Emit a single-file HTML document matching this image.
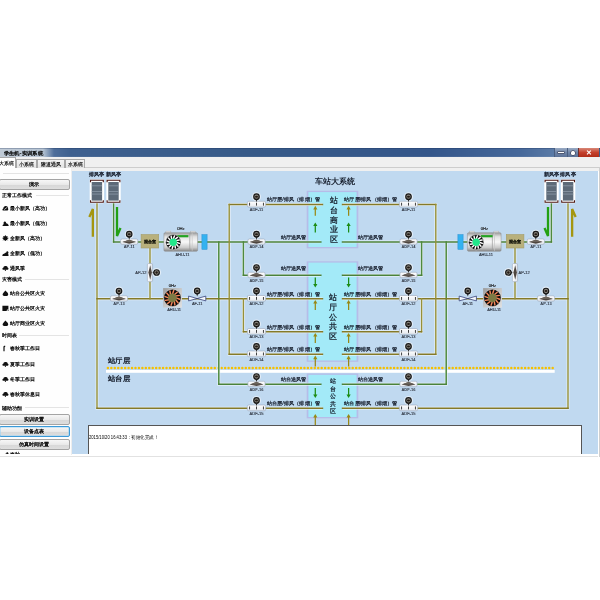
<!DOCTYPE html>
<html><head><meta charset="utf-8">
<style>
html,body{margin:0;padding:0;width:600px;height:600px;overflow:hidden;background:#fff;}
body{position:relative;font-family:"Liberation Sans",sans-serif;}
.abs{position:absolute;}
#title{left:0;top:148px;width:600px;height:9.5px;background:linear-gradient(180deg,rgba(20,40,80,.45) 0px,rgba(20,40,80,0) 1.2px,rgba(255,255,255,0) 8px,rgba(255,255,255,.18) 9.5px),linear-gradient(90deg,#bfcad6 0px,#b6c4d3 43px,#4d6d9a 54px,#3e608f 70px,#375a88 250px,#34568a 430px,#46689a 520px,#5a7aa6 553px,#3c5e8e 600px);}
#title span{position:absolute;left:3px;top:0px;font-size:5px;line-height:9px;color:#080808;font-weight:bold;transform:scaleX(1.08);transform-origin:0 0;white-space:nowrap;}
#tabstrip{left:0;top:157px;width:600px;height:14px;background:#f0f0f0;}
.tab{position:absolute;top:159px;height:9px;border:1px solid #a8a8a8;border-bottom:none;background:linear-gradient(#f4f4f4,#e2e2e2);font-size:5px;line-height:9px;text-align:center;color:#000;box-sizing:border-box;white-space:nowrap;overflow:hidden;-webkit-text-stroke:.12px #000;}
#left{left:0;top:168px;width:71.5px;height:287px;background:#fefefe;border-right:1px solid #ededed;box-sizing:border-box;}
.grp{position:absolute;left:2px;font-size:5px;line-height:7px;color:#000;white-space:nowrap;-webkit-text-stroke:.2px #000;}
.item{position:absolute;left:2px;font-size:5px;line-height:7px;color:#000;white-space:nowrap;-webkit-text-stroke:.2px #000;}
.item svg.ic{position:static;display:inline-block;width:7px;height:6.4px;margin-right:1.2px;vertical-align:-1px;}
.btn{position:absolute;left:-1px;width:70.5px;height:11px;border:1px solid #a4a4a4;border-radius:2px;background:linear-gradient(#f7f7f7,#e9e9e9 50%,#d7d7d7 51%,#dedede);font-size:5.3px;line-height:9px;text-align:center;color:#000;box-sizing:border-box;-webkit-text-stroke:.25px #000;}
.btn.focus{border-color:#3c9ad8;box-shadow:inset 0 0 0 .6px #9fd4f4;}
.sep{position:absolute;height:1px;background:#e4e4e4;}
#canvas{left:72px;top:171px;width:526px;height:283px;background:#c0d9f0;}
#bottomline{left:0;top:455.6px;width:598px;height:1px;background:#e2e2e2;}
#log{left:88px;top:425px;width:494px;height:29px;background:#fff;border-left:1px solid #555;border-top:1px solid #555;border-right:1px solid #555;box-sizing:border-box;}
#log span{position:absolute;left:0;top:9px;font-size:4.6px;line-height:6px;color:#000;transform:scaleX(.9);transform-origin:0 0;white-space:nowrap;}
</style></head>
<body>
<div id="root" style="position:absolute;left:0;top:0;width:600px;height:600px;will-change:transform;background:#fff;">
<div id="title" class="abs"></div>
<div class="abs" style="left:553.5px;top:148px;width:13.5px;height:9px;background:linear-gradient(#9aabc4,#6f85a8 50%,#5c7298);border-left:1px solid #4a5e80;box-sizing:border-box;"><div class="abs" style="left:3.5px;top:3.8px;width:5.5px;height:1.6px;background:#fff;box-shadow:0 0 0 .5px #334;"></div></div>
<div class="abs" style="left:567px;top:148px;width:11px;height:9px;background:linear-gradient(#9aabc4,#6f85a8 50%,#5c7298);border-left:1px solid #4a5e80;box-sizing:border-box;"><div class="abs" style="left:3px;top:2.5px;width:4px;height:4px;background:#fff;border-radius:1.5px;box-shadow:0 0 0 .5px #334;"></div></div>
<div class="abs" style="left:578px;top:148px;width:21px;height:9px;background:linear-gradient(#d88878,#c4402c 50%,#b02c18);border-left:1px solid #6a3030;box-sizing:border-box;"><div class="abs" style="left:7px;top:0;font-size:6.5px;line-height:9px;color:#fff;font-weight:bold;">✕</div></div>
<div id="tabstrip" class="abs"></div>
<div class="abs" style="left:0;top:167px;width:599px;height:1px;background:#cdcdcd;"></div>
<div class="tab" style="left:-9px;top:157px;height:11px;width:25px;background:#fff;line-height:10px;text-align:right;padding-right:1px;">大系统</div>
<div class="tab" style="left:16px;width:21px;">小系统</div>
<div class="tab" style="left:37px;width:28px;">隧道通风</div>
<div class="tab" style="left:65px;width:20px;">水系统</div>
<div id="left" class="abs">
</div>
<div class="abs" style="left:0;top:0;width:0;height:0;">
<div class="sep" style="top:173px;left:3px;width:66px"></div>
<div class="btn" style="top:179px">演示</div>
<div class="grp" style="top:192.0px">正常工作模式</div><div class="sep" style="top:194.5px;left:36px;width:33px"></div>
<div class="item" style="top:204.8px"><svg class="ic" width="7" height="6.4" viewBox="0 0 7 6.4"><path d="M1,5.6 C0.2,5.4 0.2,3.6 1.3,3.4 C1.4,1.6 3,0.6 4.6,1.2 C5.8,1.5 6.4,2.6 6,3.6 C6.6,4.2 6.2,5.6 5.4,5.6 Z" fill="#111"/><path d="M2.2,4.6 L5.4,2.2" stroke="#fff" stroke-width=".7"/></svg>最小新风（高功）</div>
<div class="item" style="top:219.8px"><svg class="ic" width="7" height="6.4" viewBox="0 0 7 6.4"><path d="M0.6,6 C0.4,4.8 1.2,4.2 2,4.2 C1.2,3.4 1.4,1.6 2.6,1.4 C3.8,1.2 4.4,2.4 4,3.4 C5,3.2 6.4,4 6.8,6 Z" fill="#111"/></svg>最小新风（低功）</div>
<div class="item" style="top:234.8px"><svg class="ic" width="7" height="6.4" viewBox="0 0 7 6.4"><circle cx="3.4" cy="3.2" r="2.2" fill="#111"/><path d="M3.4,0.2 V6.2 M0.4,3.2 H6.4 M1.3,1.1 L5.5,5.3 M5.5,1.1 L1.3,5.3" stroke="#111" stroke-width=".8"/></svg>全新风（高功）</div>
<div class="item" style="top:250.0px"><svg class="ic" width="7" height="6.4" viewBox="0 0 7 6.4"><path d="M0.4,6 C0.2,4.6 1,3.6 2.4,3.8 C2.6,2.8 3.4,2.6 4.2,3 C4,1.6 5,0.8 5.9,1.4 C6.8,2 6.6,3.4 5.8,3.8 C6.6,4.2 6.8,5.4 6.4,6 Z" fill="#111"/></svg>全新风（低功）</div>
<div class="item" style="top:265.0px"><svg class="ic" width="7" height="6.4" viewBox="0 0 7 6.4"><path d="M1,4.8 C0,4.6 0.2,2.8 1.4,2.8 C1.4,1.4 2.6,0.6 3.6,1 C4.6,0.6 5.8,1.4 5.6,2.6 C6.8,2.8 6.8,4.6 5.8,4.8 Z" fill="#111"/><path d="M3.4,4.4 V6.2" stroke="#111" stroke-width=".9"/></svg>通风季</div>
<div class="grp" style="top:276.0px">灾害模式</div><div class="sep" style="top:278.5px;left:25px;width:44px"></div>
<div class="item" style="top:289.5px"><svg class="ic" width="7" height="6.4" viewBox="0 0 7 6.4"><path d="M3.4,0.4 C4.6,1.6 6.4,3 6.2,4.4 C6,5.8 4.6,6.2 3.4,6.2 C2,6.2 0.6,5.6 0.6,4.2 C0.8,3 2.4,1.8 3.4,0.4 Z" fill="#111"/></svg>站台公共区火灾</div>
<div class="item" style="top:304.5px"><svg class="ic" width="7" height="6.4" viewBox="0 0 7 6.4"><path d="M0.4,0.8 H6.4 V4 C5.6,3.8 4.6,4.4 4.4,6 H0.4 Z" fill="#111"/><circle cx="5.4" cy="5.2" r="1" fill="none" stroke="#111" stroke-width=".6"/></svg>站厅公共区火灾</div>
<div class="item" style="top:319.5px"><svg class="ic" width="7" height="6.4" viewBox="0 0 7 6.4"><path d="M3.4,0.4 C4.6,1.6 6.4,3 6.2,4.4 C6,5.8 4.6,6.2 3.4,6.2 C2,6.2 0.6,5.6 0.6,4.2 C0.8,3 2.4,1.8 3.4,0.4 Z" fill="#111"/></svg>站厅商业区火灾</div>
<div class="grp" style="top:332.0px">时间表</div><div class="sep" style="top:334.5px;left:19px;width:50px"></div>
<div class="item" style="top:345.3px"><svg class="ic" width="7" height="6.4" viewBox="0 0 7 6.4"><path d="M1.4,6.2 V2 C1.4,1 2.4,0.6 3.2,0.8 V2 C2.6,2 2.6,2.6 2.6,3 V6.2 Z" fill="#111"/></svg>春秋季工作日</div>
<div class="item" style="top:360.5px"><svg class="ic" width="7" height="6.4" viewBox="0 0 7 6.4"><path d="M1,4.8 C0,4.6 0.2,2.8 1.4,2.8 C1.4,1.4 2.6,0.6 3.6,1 C4.6,0.6 5.8,1.4 5.6,2.6 C6.8,2.8 6.8,4.6 5.8,4.8 Z" fill="#111"/><path d="M3.4,4.4 V6.2" stroke="#111" stroke-width=".9"/></svg>夏季工作日</div>
<div class="item" style="top:375.5px"><svg class="ic" width="7" height="6.4" viewBox="0 0 7 6.4"><path d="M1,4.8 C0,4.6 0.2,2.8 1.4,2.8 C1.4,1.4 2.6,0.6 3.6,1 C4.6,0.6 5.8,1.4 5.6,2.6 C6.8,2.8 6.8,4.6 5.8,4.8 Z" fill="#111"/><path d="M3.4,4.4 V6.2" stroke="#111" stroke-width=".9"/></svg>冬季工作日</div>
<div class="item" style="top:390.5px"><svg class="ic" width="7" height="6.4" viewBox="0 0 7 6.4"><path d="M1,4.8 C0,4.6 0.2,2.8 1.4,2.8 C1.4,1.4 2.6,0.6 3.6,1 C4.6,0.6 5.8,1.4 5.6,2.6 C6.8,2.8 6.8,4.6 5.8,4.8 Z" fill="#111"/><path d="M3.4,4.4 V6.2" stroke="#111" stroke-width=".9"/></svg>春秋季休息日</div>
<div class="grp" style="top:404.9px">辅助功能</div><div class="sep" style="top:407.4px;left:25px;width:44px"></div>
<div class="btn" style="top:413.8px">实训设置</div>
<div class="btn focus" style="top:426px">设备点表</div>
<div class="btn" style="top:438.8px">仿真时间设置</div>
<div class="item" style="top:450.5px;overflow:hidden;height:3.5px"><svg class="ic" width="7" height="6.4" viewBox="0 0 7 6.4"><path d="M0.4,6 C0.2,4.6 1,3.6 2.4,3.8 C2.6,2.8 3.4,2.6 4.2,3 C4,1.6 5,0.8 5.9,1.4 C6.8,2 6.6,3.4 5.8,3.8 C6.6,4.2 6.8,5.4 6.4,6 Z" fill="#111"/></svg>春秋</div>
</div>
<div id="canvas" class="abs"></div>
<svg width="600" height="600" viewBox="0 0 600 600" style="position:absolute;left:0;top:0" font-family="Liberation Sans, sans-serif"><defs>
<linearGradient id="cyl" x1="0" y1="0" x2="0" y2="1">
<stop offset="0" stop-color="#9c9c9c"/><stop offset=".22" stop-color="#e2e2e2"/><stop offset=".5" stop-color="#f8f8f8"/><stop offset=".8" stop-color="#cacaca"/><stop offset="1" stop-color="#848484"/></linearGradient>
<linearGradient id="dmp" x1="0" y1="0" x2="0" y2="1"><stop offset="0" stop-color="#ffffff"/><stop offset="1" stop-color="#e4e8ee"/></linearGradient>
<linearGradient id="dmpv" x1="0" y1="0" x2="1" y2="0"><stop offset="0" stop-color="#ffffff"/><stop offset="1" stop-color="#e0e6ee"/></linearGradient>
<linearGradient id="gbox" x1="0" y1="0" x2="1" y2="1">
<stop offset="0" stop-color="#9a9a9a"/><stop offset=".5" stop-color="#c8c8c8"/><stop offset="1" stop-color="#e0e0e0"/></linearGradient>
</defs><rect x="306.7" y="190.8" width="51.6" height="57.5" fill="#b6bce8"/>
<rect x="308.4" y="192.10000000000002" width="48.2" height="54.9" fill="#a3eaf8"/>
<rect x="306.7" y="261.3" width="51.6" height="100.5" fill="#b6bce8"/>
<rect x="308.4" y="262.6" width="48.2" height="97.9" fill="#a3eaf8"/>
<rect x="306.7" y="373.5" width="51.6" height="44.80000000000001" fill="#b6bce8"/>
<rect x="308.4" y="374.8" width="48.2" height="42.20000000000001" fill="#a3eaf8"/>
<rect x="106" y="370" width="448.7" height="2.8" fill="#ffffff"/>
<line x1="107.9" y1="367.9" x2="553.5" y2="367.9" stroke="#f4c000" stroke-width="2.5" stroke-dasharray="0,3.448" stroke-linecap="round"/>
<polyline points="113.6,203.3 113.6,241.9 320.8,241.9" fill="none" stroke="#f2f7fb" stroke-width="2.9" opacity=".75"/>
<polyline points="243.4,241.9 243.4,275.2 320.8,275.2" fill="none" stroke="#f2f7fb" stroke-width="2.9" opacity=".75"/>
<polyline points="218.8,241.9 218.8,384.2 320.8,384.2" fill="none" stroke="#f2f7fb" stroke-width="2.9" opacity=".75"/>
<polyline points="551.4,203.3 551.4,241.9 342.5,241.9" fill="none" stroke="#f2f7fb" stroke-width="2.9" opacity=".75"/>
<polyline points="421.6,241.9 421.6,275.2 342.5,275.2" fill="none" stroke="#f2f7fb" stroke-width="2.9" opacity=".75"/>
<polyline points="446.2,241.9 446.2,384.2 342.5,384.2" fill="none" stroke="#f2f7fb" stroke-width="2.9" opacity=".75"/>
<polyline points="97,203.3 97,408.2 322.5,408.2" fill="none" stroke="#f2f7fb" stroke-width="2.9" opacity=".75"/>
<polyline points="568.0,203.3 568.0,408.2 342.5,408.2" fill="none" stroke="#f2f7fb" stroke-width="2.9" opacity=".75"/>
<polyline points="97,298.7 322.5,298.7" fill="none" stroke="#f2f7fb" stroke-width="2.9" opacity=".75"/>
<polyline points="150,248 150,298.7" fill="none" stroke="#f2f7fb" stroke-width="2.9" opacity=".75"/>
<polyline points="322.5,204.5 229.2,204.5 229.2,354.2 322.5,354.2" fill="none" stroke="#f2f7fb" stroke-width="2.9" opacity=".75"/>
<polyline points="243.4,298.7 243.4,331.7 322.5,331.7" fill="none" stroke="#f2f7fb" stroke-width="2.9" opacity=".75"/>
<polyline points="568.0,298.7 342.5,298.7" fill="none" stroke="#f2f7fb" stroke-width="2.9" opacity=".75"/>
<polyline points="515.0,248 515.0,298.7" fill="none" stroke="#f2f7fb" stroke-width="2.9" opacity=".75"/>
<polyline points="342.5,204.5 435.8,204.5 435.8,354.2 342.5,354.2" fill="none" stroke="#f2f7fb" stroke-width="2.9" opacity=".75"/>
<polyline points="421.6,298.7 421.6,331.7 342.5,331.7" fill="none" stroke="#f2f7fb" stroke-width="2.9" opacity=".75"/>
<line x1="113.6" y1="203.3" x2="113.6" y2="241.9" stroke="#4e8a3e" stroke-width="1.5" stroke-linecap="square"/>
<line x1="113.6" y1="241.9" x2="320.8" y2="241.9" stroke="#4a823a" stroke-width="1.5" stroke-linecap="square"/>
<line x1="243.4" y1="241.9" x2="243.4" y2="275.2" stroke="#4e8a3e" stroke-width="1.5" stroke-linecap="square"/>
<line x1="243.4" y1="275.2" x2="320.8" y2="275.2" stroke="#4a823a" stroke-width="1.5" stroke-linecap="square"/>
<line x1="218.8" y1="241.9" x2="218.8" y2="384.2" stroke="#4e8a3e" stroke-width="1.5" stroke-linecap="square"/>
<line x1="218.8" y1="384.2" x2="320.8" y2="384.2" stroke="#4a823a" stroke-width="1.5" stroke-linecap="square"/>
<line x1="551.4" y1="203.3" x2="551.4" y2="241.9" stroke="#4e8a3e" stroke-width="1.5" stroke-linecap="square"/>
<line x1="551.4" y1="241.9" x2="342.5" y2="241.9" stroke="#4a823a" stroke-width="1.5" stroke-linecap="square"/>
<line x1="421.6" y1="241.9" x2="421.6" y2="275.2" stroke="#4e8a3e" stroke-width="1.5" stroke-linecap="square"/>
<line x1="421.6" y1="275.2" x2="342.5" y2="275.2" stroke="#4a823a" stroke-width="1.5" stroke-linecap="square"/>
<line x1="446.2" y1="241.9" x2="446.2" y2="384.2" stroke="#4e8a3e" stroke-width="1.5" stroke-linecap="square"/>
<line x1="446.2" y1="384.2" x2="342.5" y2="384.2" stroke="#4a823a" stroke-width="1.5" stroke-linecap="square"/>
<line x1="97" y1="203.3" x2="97" y2="408.2" stroke="#969038" stroke-width="1.4" stroke-linecap="square"/>
<line x1="97" y1="408.2" x2="322.5" y2="408.2" stroke="#857a28" stroke-width="1.4" stroke-linecap="square"/>
<line x1="568.0" y1="203.3" x2="568.0" y2="408.2" stroke="#969038" stroke-width="1.4" stroke-linecap="square"/>
<line x1="568.0" y1="408.2" x2="342.5" y2="408.2" stroke="#857a28" stroke-width="1.4" stroke-linecap="square"/>
<line x1="97" y1="298.7" x2="322.5" y2="298.7" stroke="#857a28" stroke-width="1.4" stroke-linecap="square"/>
<line x1="150" y1="248" x2="150" y2="298.7" stroke="#969038" stroke-width="1.4" stroke-linecap="square"/>
<line x1="322.5" y1="204.5" x2="229.2" y2="204.5" stroke="#857a28" stroke-width="1.4" stroke-linecap="square"/>
<line x1="229.2" y1="204.5" x2="229.2" y2="354.2" stroke="#969038" stroke-width="1.4" stroke-linecap="square"/>
<line x1="229.2" y1="354.2" x2="322.5" y2="354.2" stroke="#857a28" stroke-width="1.4" stroke-linecap="square"/>
<line x1="243.4" y1="298.7" x2="243.4" y2="331.7" stroke="#969038" stroke-width="1.4" stroke-linecap="square"/>
<line x1="243.4" y1="331.7" x2="322.5" y2="331.7" stroke="#857a28" stroke-width="1.4" stroke-linecap="square"/>
<line x1="568.0" y1="298.7" x2="342.5" y2="298.7" stroke="#857a28" stroke-width="1.4" stroke-linecap="square"/>
<line x1="515.0" y1="248" x2="515.0" y2="298.7" stroke="#969038" stroke-width="1.4" stroke-linecap="square"/>
<line x1="342.5" y1="204.5" x2="435.8" y2="204.5" stroke="#857a28" stroke-width="1.4" stroke-linecap="square"/>
<line x1="435.8" y1="204.5" x2="435.8" y2="354.2" stroke="#969038" stroke-width="1.4" stroke-linecap="square"/>
<line x1="435.8" y1="354.2" x2="342.5" y2="354.2" stroke="#857a28" stroke-width="1.4" stroke-linecap="square"/>
<line x1="421.6" y1="298.7" x2="421.6" y2="331.7" stroke="#969038" stroke-width="1.4" stroke-linecap="square"/>
<line x1="421.6" y1="331.7" x2="342.5" y2="331.7" stroke="#857a28" stroke-width="1.4" stroke-linecap="square"/>
<text x="3.5" y="154.6" font-size="5.4" fill="#0a0a0a" text-anchor="start" stroke="#0a0a0a" stroke-width=".28" textLength="39.5" lengthAdjust="spacingAndGlyphs">学生机-实训系统</text>
<text x="335" y="184" font-size="7.8" fill="#141c2a" text-anchor="middle" font-weight="bold">车站大系统</text>
<text x="108" y="362.5" font-size="7.4" fill="#141c2a" text-anchor="start" stroke="#141c2a" stroke-width=".3" textLength="22.2" lengthAdjust="spacingAndGlyphs">站厅层</text>
<text x="108" y="381" font-size="7.4" fill="#141c2a" text-anchor="start" stroke="#141c2a" stroke-width=".3" textLength="22.2" lengthAdjust="spacingAndGlyphs">站台层</text>
<rect x="89.7" y="179.3" width="14.4" height="24" rx="1" fill="#ffffff"/>
<path d="M90.5,182.3 V180.3 H103.3 V182.3" fill="none" stroke="#4a1410" stroke-width="1.1"/>
<path d="M90.5,200.3 V202.3 H103.3 V200.3" fill="none" stroke="#4a1410" stroke-width="1.1"/>
<rect x="91.7" y="182.0" width="10.4" height="18.6" fill="#5d6a78"/>
<rect x="91.7" y="185.5" width="10.4" height="0.7" fill="#93a0ae"/>
<rect x="91.7" y="191.0" width="10.4" height="0.7" fill="#93a0ae"/>
<rect x="91.7" y="193.70000000000002" width="10.4" height="0.7" fill="#93a0ae"/>
<text x="96.9" y="175.9" font-size="5.1" fill="#1a2230" text-anchor="middle" stroke="#1a2230" stroke-width=".3" textLength="15.6" lengthAdjust="spacingAndGlyphs">排风亭</text>
<rect x="106.3" y="179.3" width="14.4" height="24" rx="1" fill="#ffffff"/>
<path d="M107.1,182.3 V180.3 H119.89999999999999 V182.3" fill="none" stroke="#4a1410" stroke-width="1.1"/>
<path d="M107.1,200.3 V202.3 H119.89999999999999 V200.3" fill="none" stroke="#4a1410" stroke-width="1.1"/>
<rect x="108.3" y="182.0" width="10.4" height="18.6" fill="#5d6a78"/>
<rect x="108.3" y="185.5" width="10.4" height="0.7" fill="#93a0ae"/>
<rect x="108.3" y="191.0" width="10.4" height="0.7" fill="#93a0ae"/>
<rect x="108.3" y="193.70000000000002" width="10.4" height="0.7" fill="#93a0ae"/>
<text x="113.5" y="175.9" font-size="5.1" fill="#1a2230" text-anchor="middle" stroke="#1a2230" stroke-width=".3" textLength="15.6" lengthAdjust="spacingAndGlyphs">新风亭</text>
<rect x="141.1" y="234.6" width="17.6" height="13.4" fill="#b8b07c" stroke="#a49c66" stroke-width=".6"/>
<text x="149.9" y="243.2" font-size="4.4" fill="#1a1a10" text-anchor="middle" font-weight="bold" stroke="#1a1a10" stroke-width=".15">混合室</text>
<rect x="201.9" y="234.6" width="5.2" height="14.8" fill="#34b2f0" stroke="#2a8fd0" stroke-width=".5"/>
<rect x="165.9" y="231.1" width="5" height="2" fill="#e6e6e6" stroke="#999" stroke-width=".3"/>
<rect x="190.4" y="231.1" width="5" height="2" fill="#e6e6e6" stroke="#999" stroke-width=".3"/>
<rect x="163.9" y="232.7" width="33.7" height="18.6" rx="1.2" fill="url(#cyl)" stroke="#8c8c8c" stroke-width=".5"/>
<rect x="189.5" y="233.2" width="0.7" height="17.6" fill="#9a9a9a"/>
<rect x="191.8" y="233.2" width="0.7" height="17.6" fill="#c8c8c8"/>
<rect x="176.9" y="235.1" width="11.5" height="2.2" fill="#22a322"/>
<circle cx="173.3" cy="242.2" r="7.6" fill="#0c0c0c" stroke="#e8e8e8" stroke-width=".5"/>
<line x1="176.40" y1="242.20" x2="179.50" y2="243.33" stroke="#ffffff" stroke-width="1.45" stroke-linecap="round"/>
<line x1="175.98" y1="243.75" x2="178.10" y2="246.28" stroke="#ffffff" stroke-width="1.45" stroke-linecap="round"/>
<line x1="174.85" y1="244.88" x2="175.42" y2="248.13" stroke="#ffffff" stroke-width="1.45" stroke-linecap="round"/>
<line x1="173.30" y1="245.30" x2="172.17" y2="248.40" stroke="#ffffff" stroke-width="1.45" stroke-linecap="round"/>
<line x1="171.75" y1="244.88" x2="169.22" y2="247.00" stroke="#ffffff" stroke-width="1.45" stroke-linecap="round"/>
<line x1="170.62" y1="243.75" x2="167.37" y2="244.32" stroke="#ffffff" stroke-width="1.45" stroke-linecap="round"/>
<line x1="170.20" y1="242.20" x2="167.10" y2="241.07" stroke="#ffffff" stroke-width="1.45" stroke-linecap="round"/>
<line x1="170.62" y1="240.65" x2="168.50" y2="238.12" stroke="#ffffff" stroke-width="1.45" stroke-linecap="round"/>
<line x1="171.75" y1="239.52" x2="171.18" y2="236.27" stroke="#ffffff" stroke-width="1.45" stroke-linecap="round"/>
<line x1="173.30" y1="239.10" x2="174.43" y2="236.00" stroke="#ffffff" stroke-width="1.45" stroke-linecap="round"/>
<line x1="174.85" y1="239.52" x2="177.38" y2="237.40" stroke="#ffffff" stroke-width="1.45" stroke-linecap="round"/>
<line x1="175.98" y1="240.65" x2="179.23" y2="240.08" stroke="#ffffff" stroke-width="1.45" stroke-linecap="round"/>
<circle cx="173.3" cy="242.2" r="3.7" fill="#22e88a"/>
<text x="180.9" y="230.29999999999998" font-size="4.2" fill="#1a1a1a" text-anchor="middle" stroke="#1a1a1a" stroke-width=".15">0Hz</text>
<text x="182.4" y="256.09999999999997" font-size="4.0" fill="#2a303c" text-anchor="middle" stroke="#2a303c" stroke-width=".12">AHU-11</text>
<rect x="163.1" y="288.1" width="18.8" height="19.4" fill="url(#gbox)"/>
<circle cx="172.4" cy="297.9" r="8.7" fill="#0c0c0c" stroke="#e8e8e8" stroke-width=".5"/>
<line x1="176.10" y1="297.90" x2="179.68" y2="299.22" stroke="#f4865a" stroke-width="1.45" stroke-linecap="round"/>
<line x1="175.60" y1="299.75" x2="178.04" y2="302.69" stroke="#f4865a" stroke-width="1.45" stroke-linecap="round"/>
<line x1="174.25" y1="301.10" x2="174.89" y2="304.87" stroke="#f4865a" stroke-width="1.45" stroke-linecap="round"/>
<line x1="172.40" y1="301.60" x2="171.08" y2="305.18" stroke="#f4865a" stroke-width="1.45" stroke-linecap="round"/>
<line x1="170.55" y1="301.10" x2="167.61" y2="303.54" stroke="#f4865a" stroke-width="1.45" stroke-linecap="round"/>
<line x1="169.20" y1="299.75" x2="165.43" y2="300.39" stroke="#f4865a" stroke-width="1.45" stroke-linecap="round"/>
<line x1="168.70" y1="297.90" x2="165.12" y2="296.58" stroke="#f4865a" stroke-width="1.45" stroke-linecap="round"/>
<line x1="169.20" y1="296.05" x2="166.76" y2="293.11" stroke="#f4865a" stroke-width="1.45" stroke-linecap="round"/>
<line x1="170.55" y1="294.70" x2="169.91" y2="290.93" stroke="#f4865a" stroke-width="1.45" stroke-linecap="round"/>
<line x1="172.40" y1="294.20" x2="173.72" y2="290.62" stroke="#f4865a" stroke-width="1.45" stroke-linecap="round"/>
<line x1="174.25" y1="294.70" x2="177.19" y2="292.26" stroke="#f4865a" stroke-width="1.45" stroke-linecap="round"/>
<line x1="175.60" y1="296.05" x2="179.37" y2="295.41" stroke="#f4865a" stroke-width="1.45" stroke-linecap="round"/>
<circle cx="172.4" cy="297.9" r="4.3" fill="#7c7a44"/>
<text x="172.4" y="286.8" font-size="4.2" fill="#1a1a1a" text-anchor="middle" stroke="#1a1a1a" stroke-width=".15">0Hz</text>
<text x="174.1" y="311.0" font-size="4.0" fill="#2a303c" text-anchor="middle" stroke="#2a303c" stroke-width=".12">AHU-11</text>
<rect x="110.4" y="295.8" width="17.2" height="5.4" rx="1.5" fill="url(#dmp)" stroke="#98a6ba" stroke-width=".6"/>
<polygon points="112.2,298.9 119.0,296.59999999999997 125.8,298.9 119.0,300.59999999999997" fill="#4e4640"/>
<polygon points="112.2,298.9 119.0,296.59999999999997 125.8,298.9" fill="#6a625a"/>
<circle cx="119.0" cy="291.0" r="4.5" fill="#f2f6fb" opacity=".7"/>
<path d="M117.8,293.4 L119.0,296.6 L120.2,293.4 Z" fill="#2a2a2a"/>
<circle cx="119.0" cy="291.0" r="2.75" fill="#86827a" stroke="#181818" stroke-width="1.2"/>
<ellipse cx="119.0" cy="291.1" rx="1.5" ry="1.0" fill="#241c16"/>
<text x="119.0" y="305.09999999999997" font-size="4.0" fill="#2e3440" text-anchor="middle" font-weight="bold">AP-13</text>
<rect x="120.6" y="239.0" width="17.2" height="5.4" rx="1.5" fill="url(#dmp)" stroke="#98a6ba" stroke-width=".6"/>
<polygon points="122.39999999999999,242.1 129.2,239.8 136.0,242.1 129.2,243.8" fill="#4e4640"/>
<polygon points="122.39999999999999,242.1 129.2,239.8 136.0,242.1" fill="#6a625a"/>
<circle cx="129.2" cy="234.20000000000002" r="4.5" fill="#f2f6fb" opacity=".7"/>
<path d="M127.99999999999999,236.60000000000002 L129.2,239.8 L130.39999999999998,236.60000000000002 Z" fill="#2a2a2a"/>
<circle cx="129.2" cy="234.20000000000002" r="2.75" fill="#86827a" stroke="#181818" stroke-width="1.2"/>
<ellipse cx="129.2" cy="234.3" rx="1.5" ry="1.0" fill="#241c16"/>
<text x="129.2" y="248.3" font-size="4.0" fill="#2e3440" text-anchor="middle" font-weight="bold">AP-11</text>
<rect x="147.4" y="263.5" width="5.2" height="18.2" rx="1.3" fill="url(#dmpv)" stroke="#98a6ba" stroke-width=".6"/>
<polygon points="150.2,265.3 151.9,272.5 150.2,279.7 148.4,272.5" fill="#4e4640"/>
<circle cx="156.6" cy="272.5" r="4.5" fill="#f2f6fb" opacity=".7"/>
<path d="M154.0,271.3 L152.4,272.5 L154.0,273.7 Z" fill="#2a2a2a"/>
<circle cx="156.6" cy="272.5" r="2.75" fill="#86827a" stroke="#181818" stroke-width="1.2"/>
<ellipse cx="156.6" cy="272.5" rx="1.2" ry="1.2" fill="#241c16"/>
<text x="146.4" y="274.0" font-size="4.0" fill="#2a303c" text-anchor="end" stroke="#2a303c" stroke-width=".12">AP-12</text>
<path d="M188.6,296.1 L197.2,298.5 L188.6,300.9 Z M205.79999999999998,296.1 L197.2,298.5 L205.79999999999998,300.9 Z" fill="#f4f8fc" stroke="#34407a" stroke-width=".8" stroke-linejoin="round"/>
<circle cx="197.2" cy="290.9" r="4.5" fill="#f2f6fb" opacity=".7"/>
<path d="M196.0,293.29999999999995 L197.2,296.5 L198.39999999999998,293.29999999999995 Z" fill="#2a2a2a"/>
<circle cx="197.2" cy="290.9" r="2.75" fill="#86827a" stroke="#181818" stroke-width="1.2"/>
<ellipse cx="197.2" cy="291.0" rx="1.5" ry="1.0" fill="#241c16"/>
<text x="197.2" y="305.1" font-size="4.0" fill="#2a303c" text-anchor="middle" stroke="#2a303c" stroke-width=".12">AF-11</text>
<rect x="247.3" y="201.3" width="18.4" height="5.8" rx="1.5" fill="url(#dmp)" stroke="#98a6ba" stroke-width=".6"/>
<path d="M249.15,202.7 h0.9 v2.6 l-0.45,0.8 l-0.45,-0.8 Z" fill="#2e2e2e"/>
<path d="M256.05,202.7 h0.9 v2.6 l-0.45,0.8 l-0.45,-0.8 Z" fill="#2e2e2e"/>
<path d="M262.95,202.7 h0.9 v2.6 l-0.45,0.8 l-0.45,-0.8 Z" fill="#2e2e2e"/>
<circle cx="256.5" cy="196.7" r="4.5" fill="#f2f6fb" opacity=".7"/>
<path d="M255.3,199.1 L256.5,202.29999999999998 L257.7,199.1 Z" fill="#2a2a2a"/>
<circle cx="256.5" cy="196.7" r="2.75" fill="#86827a" stroke="#181818" stroke-width="1.2"/>
<ellipse cx="256.5" cy="196.79999999999998" rx="1.5" ry="1.0" fill="#241c16"/>
<text x="256.5" y="211.1" font-size="4.0" fill="#2a303c" text-anchor="middle" stroke="#2a303c" stroke-width=".12">ADF-11</text>
<rect x="247.9" y="239.0" width="17.2" height="5.4" rx="1.5" fill="url(#dmp)" stroke="#98a6ba" stroke-width=".6"/>
<polygon points="249.7,242.1 256.5,239.8 263.3,242.1 256.5,243.8" fill="#4e4640"/>
<polygon points="249.7,242.1 256.5,239.8 263.3,242.1" fill="#6a625a"/>
<circle cx="256.5" cy="234.20000000000002" r="4.5" fill="#f2f6fb" opacity=".7"/>
<path d="M255.3,236.60000000000002 L256.5,239.8 L257.7,236.60000000000002 Z" fill="#2a2a2a"/>
<circle cx="256.5" cy="234.20000000000002" r="2.75" fill="#86827a" stroke="#181818" stroke-width="1.2"/>
<ellipse cx="256.5" cy="234.3" rx="1.5" ry="1.0" fill="#241c16"/>
<text x="256.5" y="248.3" font-size="4.0" fill="#2e3440" text-anchor="middle" font-weight="bold">ADF-14</text>
<rect x="247.9" y="272.3" width="17.2" height="5.4" rx="1.5" fill="url(#dmp)" stroke="#98a6ba" stroke-width=".6"/>
<polygon points="249.7,275.4 256.5,273.09999999999997 263.3,275.4 256.5,277.09999999999997" fill="#4e4640"/>
<polygon points="249.7,275.4 256.5,273.09999999999997 263.3,275.4" fill="#6a625a"/>
<circle cx="256.5" cy="267.5" r="4.5" fill="#f2f6fb" opacity=".7"/>
<path d="M255.3,269.9 L256.5,273.1 L257.7,269.9 Z" fill="#2a2a2a"/>
<circle cx="256.5" cy="267.5" r="2.75" fill="#86827a" stroke="#181818" stroke-width="1.2"/>
<ellipse cx="256.5" cy="267.6" rx="1.5" ry="1.0" fill="#241c16"/>
<text x="256.5" y="281.59999999999997" font-size="4.0" fill="#2e3440" text-anchor="middle" font-weight="bold">ADF-15</text>
<rect x="247.3" y="295.5" width="18.4" height="5.8" rx="1.5" fill="url(#dmp)" stroke="#98a6ba" stroke-width=".6"/>
<path d="M249.15,296.9 h0.9 v2.6 l-0.45,0.8 l-0.45,-0.8 Z" fill="#2e2e2e"/>
<path d="M256.05,296.9 h0.9 v2.6 l-0.45,0.8 l-0.45,-0.8 Z" fill="#2e2e2e"/>
<path d="M262.95,296.9 h0.9 v2.6 l-0.45,0.8 l-0.45,-0.8 Z" fill="#2e2e2e"/>
<circle cx="256.5" cy="290.9" r="4.5" fill="#f2f6fb" opacity=".7"/>
<path d="M255.3,293.29999999999995 L256.5,296.5 L257.7,293.29999999999995 Z" fill="#2a2a2a"/>
<circle cx="256.5" cy="290.9" r="2.75" fill="#86827a" stroke="#181818" stroke-width="1.2"/>
<ellipse cx="256.5" cy="291.0" rx="1.5" ry="1.0" fill="#241c16"/>
<text x="256.5" y="305.3" font-size="4.0" fill="#2a303c" text-anchor="middle" stroke="#2a303c" stroke-width=".12">ADF-12</text>
<rect x="247.3" y="328.5" width="18.4" height="5.8" rx="1.5" fill="url(#dmp)" stroke="#98a6ba" stroke-width=".6"/>
<path d="M249.15,329.9 h0.9 v2.6 l-0.45,0.8 l-0.45,-0.8 Z" fill="#2e2e2e"/>
<path d="M256.05,329.9 h0.9 v2.6 l-0.45,0.8 l-0.45,-0.8 Z" fill="#2e2e2e"/>
<path d="M262.95,329.9 h0.9 v2.6 l-0.45,0.8 l-0.45,-0.8 Z" fill="#2e2e2e"/>
<circle cx="256.5" cy="323.9" r="4.5" fill="#f2f6fb" opacity=".7"/>
<path d="M255.3,326.29999999999995 L256.5,329.5 L257.7,326.29999999999995 Z" fill="#2a2a2a"/>
<circle cx="256.5" cy="323.9" r="2.75" fill="#86827a" stroke="#181818" stroke-width="1.2"/>
<ellipse cx="256.5" cy="324.0" rx="1.5" ry="1.0" fill="#241c16"/>
<text x="256.5" y="338.3" font-size="4.0" fill="#2a303c" text-anchor="middle" stroke="#2a303c" stroke-width=".12">ADF-13</text>
<rect x="247.3" y="351.0" width="18.4" height="5.8" rx="1.5" fill="url(#dmp)" stroke="#98a6ba" stroke-width=".6"/>
<path d="M249.15,352.4 h0.9 v2.6 l-0.45,0.8 l-0.45,-0.8 Z" fill="#2e2e2e"/>
<path d="M256.05,352.4 h0.9 v2.6 l-0.45,0.8 l-0.45,-0.8 Z" fill="#2e2e2e"/>
<path d="M262.95,352.4 h0.9 v2.6 l-0.45,0.8 l-0.45,-0.8 Z" fill="#2e2e2e"/>
<circle cx="256.5" cy="346.4" r="4.5" fill="#f2f6fb" opacity=".7"/>
<path d="M255.3,348.79999999999995 L256.5,352.0 L257.7,348.79999999999995 Z" fill="#2a2a2a"/>
<circle cx="256.5" cy="346.4" r="2.75" fill="#86827a" stroke="#181818" stroke-width="1.2"/>
<ellipse cx="256.5" cy="346.5" rx="1.5" ry="1.0" fill="#241c16"/>
<text x="256.5" y="360.8" font-size="4.0" fill="#2a303c" text-anchor="middle" stroke="#2a303c" stroke-width=".12">ADF-14</text>
<rect x="247.9" y="381.3" width="17.2" height="5.4" rx="1.5" fill="url(#dmp)" stroke="#98a6ba" stroke-width=".6"/>
<polygon points="249.7,384.4 256.5,382.09999999999997 263.3,384.4 256.5,386.09999999999997" fill="#4e4640"/>
<polygon points="249.7,384.4 256.5,382.09999999999997 263.3,384.4" fill="#6a625a"/>
<circle cx="256.5" cy="376.5" r="4.5" fill="#f2f6fb" opacity=".7"/>
<path d="M255.3,378.9 L256.5,382.1 L257.7,378.9 Z" fill="#2a2a2a"/>
<circle cx="256.5" cy="376.5" r="2.75" fill="#86827a" stroke="#181818" stroke-width="1.2"/>
<ellipse cx="256.5" cy="376.6" rx="1.5" ry="1.0" fill="#241c16"/>
<text x="256.5" y="390.59999999999997" font-size="4.0" fill="#2e3440" text-anchor="middle" font-weight="bold">ADF-16</text>
<rect x="247.3" y="405.0" width="18.4" height="5.8" rx="1.5" fill="url(#dmp)" stroke="#98a6ba" stroke-width=".6"/>
<path d="M249.15,406.4 h0.9 v2.6 l-0.45,0.8 l-0.45,-0.8 Z" fill="#2e2e2e"/>
<path d="M256.05,406.4 h0.9 v2.6 l-0.45,0.8 l-0.45,-0.8 Z" fill="#2e2e2e"/>
<path d="M262.95,406.4 h0.9 v2.6 l-0.45,0.8 l-0.45,-0.8 Z" fill="#2e2e2e"/>
<circle cx="256.5" cy="400.4" r="4.5" fill="#f2f6fb" opacity=".7"/>
<path d="M255.3,402.79999999999995 L256.5,406.0 L257.7,402.79999999999995 Z" fill="#2a2a2a"/>
<circle cx="256.5" cy="400.4" r="2.75" fill="#86827a" stroke="#181818" stroke-width="1.2"/>
<ellipse cx="256.5" cy="400.5" rx="1.5" ry="1.0" fill="#241c16"/>
<text x="256.5" y="414.8" font-size="4.0" fill="#2a303c" text-anchor="middle" stroke="#2a303c" stroke-width=".12">ADF-15</text>
<polyline points="89.35,217 92.85,209 92.85,236.8" fill="none" stroke="#a49610" stroke-width="2.3" stroke-linejoin="miter"/>
<polyline points="117.0,207.1 117.0,236.0 120.5,228.0" fill="none" stroke="#22a012" stroke-width="2.3" stroke-linejoin="miter"/>
<text x="266.7" y="201.2" font-size="5.3" fill="#141c2a" text-anchor="start" stroke="#141c2a" stroke-width=".2" textLength="53.5" lengthAdjust="spacingAndGlyphs">站厅层/排风（排烟）管</text>
<text x="280.8" y="238.7" font-size="5.3" fill="#141c2a" text-anchor="start" stroke="#141c2a" stroke-width=".2" textLength="25.8" lengthAdjust="spacingAndGlyphs">站厅送风管</text>
<text x="280.8" y="270.3" font-size="5.3" fill="#141c2a" text-anchor="start" stroke="#141c2a" stroke-width=".2" textLength="25.8" lengthAdjust="spacingAndGlyphs">站厅送风管</text>
<text x="266.7" y="295.7" font-size="5.3" fill="#141c2a" text-anchor="start" stroke="#141c2a" stroke-width=".2" textLength="53.5" lengthAdjust="spacingAndGlyphs">站厅层/排风（排烟）管</text>
<text x="266.7" y="328.7" font-size="5.3" fill="#141c2a" text-anchor="start" stroke="#141c2a" stroke-width=".2" textLength="53.5" lengthAdjust="spacingAndGlyphs">站厅层/排风（排烟）管</text>
<text x="266.7" y="351.2" font-size="5.3" fill="#141c2a" text-anchor="start" stroke="#141c2a" stroke-width=".2" textLength="53.5" lengthAdjust="spacingAndGlyphs">站厅层/排风（排烟）管</text>
<text x="280.8" y="380.7" font-size="5.3" fill="#141c2a" text-anchor="start" stroke="#141c2a" stroke-width=".2" textLength="25.8" lengthAdjust="spacingAndGlyphs">站台送风管</text>
<text x="266.7" y="405.0" font-size="5.3" fill="#141c2a" text-anchor="start" stroke="#141c2a" stroke-width=".2" textLength="53.5" lengthAdjust="spacingAndGlyphs">站台层/排风（排烟）管</text>
<rect x="560.9" y="179.3" width="14.4" height="24" rx="1" fill="#ffffff"/>
<path d="M561.6999999999999,182.3 V180.3 H574.5 V182.3" fill="none" stroke="#4a1410" stroke-width="1.1"/>
<path d="M561.6999999999999,200.3 V202.3 H574.5 V200.3" fill="none" stroke="#4a1410" stroke-width="1.1"/>
<rect x="562.9" y="182.0" width="10.4" height="18.6" fill="#5d6a78"/>
<rect x="562.9" y="185.5" width="10.4" height="0.7" fill="#93a0ae"/>
<rect x="562.9" y="191.0" width="10.4" height="0.7" fill="#93a0ae"/>
<rect x="562.9" y="193.70000000000002" width="10.4" height="0.7" fill="#93a0ae"/>
<text x="568.1" y="175.9" font-size="5.1" fill="#1a2230" text-anchor="middle" stroke="#1a2230" stroke-width=".3" textLength="15.6" lengthAdjust="spacingAndGlyphs">排风亭</text>
<rect x="544.3000000000001" y="179.3" width="14.4" height="24" rx="1" fill="#ffffff"/>
<path d="M545.1,182.3 V180.3 H557.9000000000001 V182.3" fill="none" stroke="#4a1410" stroke-width="1.1"/>
<path d="M545.1,200.3 V202.3 H557.9000000000001 V200.3" fill="none" stroke="#4a1410" stroke-width="1.1"/>
<rect x="546.3000000000001" y="182.0" width="10.4" height="18.6" fill="#5d6a78"/>
<rect x="546.3000000000001" y="185.5" width="10.4" height="0.7" fill="#93a0ae"/>
<rect x="546.3000000000001" y="191.0" width="10.4" height="0.7" fill="#93a0ae"/>
<rect x="546.3000000000001" y="193.70000000000002" width="10.4" height="0.7" fill="#93a0ae"/>
<text x="551.5000000000001" y="175.9" font-size="5.1" fill="#1a2230" text-anchor="middle" stroke="#1a2230" stroke-width=".3" textLength="15.6" lengthAdjust="spacingAndGlyphs">新风亭</text>
<rect x="506.29999999999995" y="234.6" width="17.6" height="13.4" fill="#b8b07c" stroke="#a49c66" stroke-width=".6"/>
<text x="515.0999999999999" y="243.2" font-size="4.4" fill="#1a1a10" text-anchor="middle" font-weight="bold" stroke="#1a1a10" stroke-width=".15">混合室</text>
<rect x="457.90000000000003" y="234.6" width="5.2" height="14.8" fill="#34b2f0" stroke="#2a8fd0" stroke-width=".5"/>
<rect x="469.40000000000003" y="231.1" width="5" height="2" fill="#e6e6e6" stroke="#999" stroke-width=".3"/>
<rect x="493.90000000000003" y="231.1" width="5" height="2" fill="#e6e6e6" stroke="#999" stroke-width=".3"/>
<rect x="467.40000000000003" y="232.7" width="33.7" height="18.6" rx="1.2" fill="url(#cyl)" stroke="#8c8c8c" stroke-width=".5"/>
<rect x="491.90000000000003" y="233.2" width="0.7" height="17.6" fill="#9a9a9a"/>
<rect x="494.00000000000006" y="233.2" width="0.7" height="17.6" fill="#c8c8c8"/>
<rect x="480.90000000000003" y="235.1" width="11.699999999999989" height="2.2" fill="#22a322"/>
<circle cx="476.20000000000005" cy="242.2" r="7.6" fill="#0c0c0c" stroke="#e8e8e8" stroke-width=".5"/>
<line x1="479.30" y1="242.20" x2="482.40" y2="243.33" stroke="#ffffff" stroke-width="1.45" stroke-linecap="round"/>
<line x1="478.88" y1="243.75" x2="481.00" y2="246.28" stroke="#ffffff" stroke-width="1.45" stroke-linecap="round"/>
<line x1="477.75" y1="244.88" x2="478.32" y2="248.13" stroke="#ffffff" stroke-width="1.45" stroke-linecap="round"/>
<line x1="476.20" y1="245.30" x2="475.07" y2="248.40" stroke="#ffffff" stroke-width="1.45" stroke-linecap="round"/>
<line x1="474.65" y1="244.88" x2="472.12" y2="247.00" stroke="#ffffff" stroke-width="1.45" stroke-linecap="round"/>
<line x1="473.52" y1="243.75" x2="470.27" y2="244.32" stroke="#ffffff" stroke-width="1.45" stroke-linecap="round"/>
<line x1="473.10" y1="242.20" x2="470.00" y2="241.07" stroke="#ffffff" stroke-width="1.45" stroke-linecap="round"/>
<line x1="473.52" y1="240.65" x2="471.40" y2="238.12" stroke="#ffffff" stroke-width="1.45" stroke-linecap="round"/>
<line x1="474.65" y1="239.52" x2="474.08" y2="236.27" stroke="#ffffff" stroke-width="1.45" stroke-linecap="round"/>
<line x1="476.20" y1="239.10" x2="477.33" y2="236.00" stroke="#ffffff" stroke-width="1.45" stroke-linecap="round"/>
<line x1="477.75" y1="239.52" x2="480.28" y2="237.40" stroke="#ffffff" stroke-width="1.45" stroke-linecap="round"/>
<line x1="478.88" y1="240.65" x2="482.13" y2="240.08" stroke="#ffffff" stroke-width="1.45" stroke-linecap="round"/>
<circle cx="476.20000000000005" cy="242.2" r="3.7" fill="#22e88a"/>
<text x="484.40000000000003" y="230.29999999999998" font-size="4.2" fill="#1a1a1a" text-anchor="middle" stroke="#1a1a1a" stroke-width=".15">0Hz</text>
<text x="485.90000000000003" y="256.09999999999997" font-size="4.0" fill="#2a303c" text-anchor="middle" stroke="#2a303c" stroke-width=".12">AHU-11</text>
<rect x="483.09999999999997" y="288.1" width="18.8" height="19.4" fill="url(#gbox)"/>
<circle cx="492.4" cy="297.9" r="8.7" fill="#0c0c0c" stroke="#e8e8e8" stroke-width=".5"/>
<line x1="496.10" y1="297.90" x2="499.68" y2="299.22" stroke="#f4865a" stroke-width="1.45" stroke-linecap="round"/>
<line x1="495.60" y1="299.75" x2="498.04" y2="302.69" stroke="#f4865a" stroke-width="1.45" stroke-linecap="round"/>
<line x1="494.25" y1="301.10" x2="494.89" y2="304.87" stroke="#f4865a" stroke-width="1.45" stroke-linecap="round"/>
<line x1="492.40" y1="301.60" x2="491.08" y2="305.18" stroke="#f4865a" stroke-width="1.45" stroke-linecap="round"/>
<line x1="490.55" y1="301.10" x2="487.61" y2="303.54" stroke="#f4865a" stroke-width="1.45" stroke-linecap="round"/>
<line x1="489.20" y1="299.75" x2="485.43" y2="300.39" stroke="#f4865a" stroke-width="1.45" stroke-linecap="round"/>
<line x1="488.70" y1="297.90" x2="485.12" y2="296.58" stroke="#f4865a" stroke-width="1.45" stroke-linecap="round"/>
<line x1="489.20" y1="296.05" x2="486.76" y2="293.11" stroke="#f4865a" stroke-width="1.45" stroke-linecap="round"/>
<line x1="490.55" y1="294.70" x2="489.91" y2="290.93" stroke="#f4865a" stroke-width="1.45" stroke-linecap="round"/>
<line x1="492.40" y1="294.20" x2="493.72" y2="290.62" stroke="#f4865a" stroke-width="1.45" stroke-linecap="round"/>
<line x1="494.25" y1="294.70" x2="497.19" y2="292.26" stroke="#f4865a" stroke-width="1.45" stroke-linecap="round"/>
<line x1="495.60" y1="296.05" x2="499.37" y2="295.41" stroke="#f4865a" stroke-width="1.45" stroke-linecap="round"/>
<circle cx="492.4" cy="297.9" r="4.3" fill="#7c7a44"/>
<text x="492.4" y="286.8" font-size="4.2" fill="#1a1a1a" text-anchor="middle" stroke="#1a1a1a" stroke-width=".15">0Hz</text>
<text x="494.09999999999997" y="311.0" font-size="4.0" fill="#2a303c" text-anchor="middle" stroke="#2a303c" stroke-width=".12">AHU-11</text>
<rect x="537.4" y="295.8" width="17.2" height="5.4" rx="1.5" fill="url(#dmp)" stroke="#98a6ba" stroke-width=".6"/>
<polygon points="539.2,298.9 546.0,296.59999999999997 552.8,298.9 546.0,300.59999999999997" fill="#4e4640"/>
<polygon points="539.2,298.9 546.0,296.59999999999997 552.8,298.9" fill="#6a625a"/>
<circle cx="546.0" cy="291.0" r="4.5" fill="#f2f6fb" opacity=".7"/>
<path d="M544.8,293.4 L546.0,296.6 L547.2,293.4 Z" fill="#2a2a2a"/>
<circle cx="546.0" cy="291.0" r="2.75" fill="#86827a" stroke="#181818" stroke-width="1.2"/>
<ellipse cx="546.0" cy="291.1" rx="1.5" ry="1.0" fill="#241c16"/>
<text x="546.0" y="305.09999999999997" font-size="4.0" fill="#2e3440" text-anchor="middle" font-weight="bold">AP-13</text>
<rect x="527.1999999999999" y="239.0" width="17.2" height="5.4" rx="1.5" fill="url(#dmp)" stroke="#98a6ba" stroke-width=".6"/>
<polygon points="529.0,242.1 535.8,239.8 542.5999999999999,242.1 535.8,243.8" fill="#4e4640"/>
<polygon points="529.0,242.1 535.8,239.8 542.5999999999999,242.1" fill="#6a625a"/>
<circle cx="535.8" cy="234.20000000000002" r="4.5" fill="#f2f6fb" opacity=".7"/>
<path d="M534.5999999999999,236.60000000000002 L535.8,239.8 L537.0,236.60000000000002 Z" fill="#2a2a2a"/>
<circle cx="535.8" cy="234.20000000000002" r="2.75" fill="#86827a" stroke="#181818" stroke-width="1.2"/>
<ellipse cx="535.8" cy="234.3" rx="1.5" ry="1.0" fill="#241c16"/>
<text x="535.8" y="248.3" font-size="4.0" fill="#2e3440" text-anchor="middle" font-weight="bold">AP-11</text>
<rect x="512.4" y="263.5" width="5.2" height="18.2" rx="1.3" fill="url(#dmpv)" stroke="#98a6ba" stroke-width=".6"/>
<polygon points="515.2,265.3 516.9,272.5 515.2,279.7 513.4,272.5" fill="#4e4640"/>
<circle cx="508.4" cy="272.5" r="4.5" fill="#f2f6fb" opacity=".7"/>
<path d="M511.0,271.3 L512.6,272.5 L511.0,273.7 Z" fill="#2a2a2a"/>
<circle cx="508.4" cy="272.5" r="2.75" fill="#86827a" stroke="#181818" stroke-width="1.2"/>
<ellipse cx="508.4" cy="272.5" rx="1.2" ry="1.2" fill="#241c16"/>
<text x="518.6" y="274.0" font-size="4.0" fill="#2a303c" text-anchor="start" stroke="#2a303c" stroke-width=".12">AP-12</text>
<path d="M459.2,296.1 L467.8,298.5 L459.2,300.9 Z M476.40000000000003,296.1 L467.8,298.5 L476.40000000000003,300.9 Z" fill="#f4f8fc" stroke="#34407a" stroke-width=".8" stroke-linejoin="round"/>
<circle cx="467.8" cy="290.9" r="4.5" fill="#f2f6fb" opacity=".7"/>
<path d="M466.6,293.29999999999995 L467.8,296.5 L469.0,293.29999999999995 Z" fill="#2a2a2a"/>
<circle cx="467.8" cy="290.9" r="2.75" fill="#86827a" stroke="#181818" stroke-width="1.2"/>
<ellipse cx="467.8" cy="291.0" rx="1.5" ry="1.0" fill="#241c16"/>
<text x="467.8" y="305.1" font-size="4.0" fill="#2a303c" text-anchor="middle" stroke="#2a303c" stroke-width=".12">AF-11</text>
<rect x="399.3" y="201.3" width="18.4" height="5.8" rx="1.5" fill="url(#dmp)" stroke="#98a6ba" stroke-width=".6"/>
<path d="M401.15000000000003,202.7 h0.9 v2.6 l-0.45,0.8 l-0.45,-0.8 Z" fill="#2e2e2e"/>
<path d="M408.05,202.7 h0.9 v2.6 l-0.45,0.8 l-0.45,-0.8 Z" fill="#2e2e2e"/>
<path d="M414.95,202.7 h0.9 v2.6 l-0.45,0.8 l-0.45,-0.8 Z" fill="#2e2e2e"/>
<circle cx="408.5" cy="196.7" r="4.5" fill="#f2f6fb" opacity=".7"/>
<path d="M407.3,199.1 L408.5,202.29999999999998 L409.7,199.1 Z" fill="#2a2a2a"/>
<circle cx="408.5" cy="196.7" r="2.75" fill="#86827a" stroke="#181818" stroke-width="1.2"/>
<ellipse cx="408.5" cy="196.79999999999998" rx="1.5" ry="1.0" fill="#241c16"/>
<text x="408.5" y="211.1" font-size="4.0" fill="#2a303c" text-anchor="middle" stroke="#2a303c" stroke-width=".12">ADF-11</text>
<rect x="399.9" y="239.0" width="17.2" height="5.4" rx="1.5" fill="url(#dmp)" stroke="#98a6ba" stroke-width=".6"/>
<polygon points="401.7,242.1 408.5,239.8 415.3,242.1 408.5,243.8" fill="#4e4640"/>
<polygon points="401.7,242.1 408.5,239.8 415.3,242.1" fill="#6a625a"/>
<circle cx="408.5" cy="234.20000000000002" r="4.5" fill="#f2f6fb" opacity=".7"/>
<path d="M407.3,236.60000000000002 L408.5,239.8 L409.7,236.60000000000002 Z" fill="#2a2a2a"/>
<circle cx="408.5" cy="234.20000000000002" r="2.75" fill="#86827a" stroke="#181818" stroke-width="1.2"/>
<ellipse cx="408.5" cy="234.3" rx="1.5" ry="1.0" fill="#241c16"/>
<text x="408.5" y="248.3" font-size="4.0" fill="#2e3440" text-anchor="middle" font-weight="bold">ADF-14</text>
<rect x="399.9" y="272.3" width="17.2" height="5.4" rx="1.5" fill="url(#dmp)" stroke="#98a6ba" stroke-width=".6"/>
<polygon points="401.7,275.4 408.5,273.09999999999997 415.3,275.4 408.5,277.09999999999997" fill="#4e4640"/>
<polygon points="401.7,275.4 408.5,273.09999999999997 415.3,275.4" fill="#6a625a"/>
<circle cx="408.5" cy="267.5" r="4.5" fill="#f2f6fb" opacity=".7"/>
<path d="M407.3,269.9 L408.5,273.1 L409.7,269.9 Z" fill="#2a2a2a"/>
<circle cx="408.5" cy="267.5" r="2.75" fill="#86827a" stroke="#181818" stroke-width="1.2"/>
<ellipse cx="408.5" cy="267.6" rx="1.5" ry="1.0" fill="#241c16"/>
<text x="408.5" y="281.59999999999997" font-size="4.0" fill="#2e3440" text-anchor="middle" font-weight="bold">ADF-15</text>
<rect x="399.3" y="295.5" width="18.4" height="5.8" rx="1.5" fill="url(#dmp)" stroke="#98a6ba" stroke-width=".6"/>
<path d="M401.15000000000003,296.9 h0.9 v2.6 l-0.45,0.8 l-0.45,-0.8 Z" fill="#2e2e2e"/>
<path d="M408.05,296.9 h0.9 v2.6 l-0.45,0.8 l-0.45,-0.8 Z" fill="#2e2e2e"/>
<path d="M414.95,296.9 h0.9 v2.6 l-0.45,0.8 l-0.45,-0.8 Z" fill="#2e2e2e"/>
<circle cx="408.5" cy="290.9" r="4.5" fill="#f2f6fb" opacity=".7"/>
<path d="M407.3,293.29999999999995 L408.5,296.5 L409.7,293.29999999999995 Z" fill="#2a2a2a"/>
<circle cx="408.5" cy="290.9" r="2.75" fill="#86827a" stroke="#181818" stroke-width="1.2"/>
<ellipse cx="408.5" cy="291.0" rx="1.5" ry="1.0" fill="#241c16"/>
<text x="408.5" y="305.3" font-size="4.0" fill="#2a303c" text-anchor="middle" stroke="#2a303c" stroke-width=".12">ADF-12</text>
<rect x="399.3" y="328.5" width="18.4" height="5.8" rx="1.5" fill="url(#dmp)" stroke="#98a6ba" stroke-width=".6"/>
<path d="M401.15000000000003,329.9 h0.9 v2.6 l-0.45,0.8 l-0.45,-0.8 Z" fill="#2e2e2e"/>
<path d="M408.05,329.9 h0.9 v2.6 l-0.45,0.8 l-0.45,-0.8 Z" fill="#2e2e2e"/>
<path d="M414.95,329.9 h0.9 v2.6 l-0.45,0.8 l-0.45,-0.8 Z" fill="#2e2e2e"/>
<circle cx="408.5" cy="323.9" r="4.5" fill="#f2f6fb" opacity=".7"/>
<path d="M407.3,326.29999999999995 L408.5,329.5 L409.7,326.29999999999995 Z" fill="#2a2a2a"/>
<circle cx="408.5" cy="323.9" r="2.75" fill="#86827a" stroke="#181818" stroke-width="1.2"/>
<ellipse cx="408.5" cy="324.0" rx="1.5" ry="1.0" fill="#241c16"/>
<text x="408.5" y="338.3" font-size="4.0" fill="#2a303c" text-anchor="middle" stroke="#2a303c" stroke-width=".12">ADF-13</text>
<rect x="399.3" y="351.0" width="18.4" height="5.8" rx="1.5" fill="url(#dmp)" stroke="#98a6ba" stroke-width=".6"/>
<path d="M401.15000000000003,352.4 h0.9 v2.6 l-0.45,0.8 l-0.45,-0.8 Z" fill="#2e2e2e"/>
<path d="M408.05,352.4 h0.9 v2.6 l-0.45,0.8 l-0.45,-0.8 Z" fill="#2e2e2e"/>
<path d="M414.95,352.4 h0.9 v2.6 l-0.45,0.8 l-0.45,-0.8 Z" fill="#2e2e2e"/>
<circle cx="408.5" cy="346.4" r="4.5" fill="#f2f6fb" opacity=".7"/>
<path d="M407.3,348.79999999999995 L408.5,352.0 L409.7,348.79999999999995 Z" fill="#2a2a2a"/>
<circle cx="408.5" cy="346.4" r="2.75" fill="#86827a" stroke="#181818" stroke-width="1.2"/>
<ellipse cx="408.5" cy="346.5" rx="1.5" ry="1.0" fill="#241c16"/>
<text x="408.5" y="360.8" font-size="4.0" fill="#2a303c" text-anchor="middle" stroke="#2a303c" stroke-width=".12">ADF-14</text>
<rect x="399.9" y="381.3" width="17.2" height="5.4" rx="1.5" fill="url(#dmp)" stroke="#98a6ba" stroke-width=".6"/>
<polygon points="401.7,384.4 408.5,382.09999999999997 415.3,384.4 408.5,386.09999999999997" fill="#4e4640"/>
<polygon points="401.7,384.4 408.5,382.09999999999997 415.3,384.4" fill="#6a625a"/>
<circle cx="408.5" cy="376.5" r="4.5" fill="#f2f6fb" opacity=".7"/>
<path d="M407.3,378.9 L408.5,382.1 L409.7,378.9 Z" fill="#2a2a2a"/>
<circle cx="408.5" cy="376.5" r="2.75" fill="#86827a" stroke="#181818" stroke-width="1.2"/>
<ellipse cx="408.5" cy="376.6" rx="1.5" ry="1.0" fill="#241c16"/>
<text x="408.5" y="390.59999999999997" font-size="4.0" fill="#2e3440" text-anchor="middle" font-weight="bold">ADF-16</text>
<rect x="399.3" y="405.0" width="18.4" height="5.8" rx="1.5" fill="url(#dmp)" stroke="#98a6ba" stroke-width=".6"/>
<path d="M401.15000000000003,406.4 h0.9 v2.6 l-0.45,0.8 l-0.45,-0.8 Z" fill="#2e2e2e"/>
<path d="M408.05,406.4 h0.9 v2.6 l-0.45,0.8 l-0.45,-0.8 Z" fill="#2e2e2e"/>
<path d="M414.95,406.4 h0.9 v2.6 l-0.45,0.8 l-0.45,-0.8 Z" fill="#2e2e2e"/>
<circle cx="408.5" cy="400.4" r="4.5" fill="#f2f6fb" opacity=".7"/>
<path d="M407.3,402.79999999999995 L408.5,406.0 L409.7,402.79999999999995 Z" fill="#2a2a2a"/>
<circle cx="408.5" cy="400.4" r="2.75" fill="#86827a" stroke="#181818" stroke-width="1.2"/>
<ellipse cx="408.5" cy="400.5" rx="1.5" ry="1.0" fill="#241c16"/>
<text x="408.5" y="414.8" font-size="4.0" fill="#2a303c" text-anchor="middle" stroke="#2a303c" stroke-width=".12">ADF-15</text>
<polyline points="575.65,217 572.15,209 572.15,236.8" fill="none" stroke="#a49610" stroke-width="2.3" stroke-linejoin="miter"/>
<polyline points="548.0,207.1 548.0,236.0 544.5,228.0" fill="none" stroke="#22a012" stroke-width="2.3" stroke-linejoin="miter"/>
<text x="344.2" y="201.2" font-size="5.3" fill="#141c2a" text-anchor="start" stroke="#141c2a" stroke-width=".2" textLength="53.5" lengthAdjust="spacingAndGlyphs">站厅层/排风（排烟）管</text>
<text x="357.6" y="238.7" font-size="5.3" fill="#141c2a" text-anchor="start" stroke="#141c2a" stroke-width=".2" textLength="25.8" lengthAdjust="spacingAndGlyphs">站厅送风管</text>
<text x="357.6" y="270.3" font-size="5.3" fill="#141c2a" text-anchor="start" stroke="#141c2a" stroke-width=".2" textLength="25.8" lengthAdjust="spacingAndGlyphs">站厅送风管</text>
<text x="344.2" y="295.7" font-size="5.3" fill="#141c2a" text-anchor="start" stroke="#141c2a" stroke-width=".2" textLength="53.5" lengthAdjust="spacingAndGlyphs">站厅层/排风（排烟）管</text>
<text x="344.2" y="328.7" font-size="5.3" fill="#141c2a" text-anchor="start" stroke="#141c2a" stroke-width=".2" textLength="53.5" lengthAdjust="spacingAndGlyphs">站厅层/排风（排烟）管</text>
<text x="344.2" y="351.2" font-size="5.3" fill="#141c2a" text-anchor="start" stroke="#141c2a" stroke-width=".2" textLength="53.5" lengthAdjust="spacingAndGlyphs">站厅层/排风（排烟）管</text>
<text x="357.6" y="380.7" font-size="5.3" fill="#141c2a" text-anchor="start" stroke="#141c2a" stroke-width=".2" textLength="25.8" lengthAdjust="spacingAndGlyphs">站台送风管</text>
<text x="344.2" y="405.0" font-size="5.3" fill="#141c2a" text-anchor="start" stroke="#141c2a" stroke-width=".2" textLength="53.5" lengthAdjust="spacingAndGlyphs">站台层/排风（排烟）管</text>
<line x1="315.3" y1="208.3" x2="315.3" y2="215.8" stroke="#988816" stroke-width="1.25"/>
<polygon points="313.2,209.4 315.3,205.8 317.40000000000003,209.4" fill="#988816"/>
<line x1="315.3" y1="225.0" x2="315.3" y2="232.5" stroke="#1c8c14" stroke-width="1.25"/>
<polygon points="313.2,226.1 315.3,222.5 317.40000000000003,226.1" fill="#1c8c14"/>
<line x1="315.3" y1="277.5" x2="315.3" y2="285.0" stroke="#1c8c14" stroke-width="1.25"/>
<polygon points="313.2,283.9 315.3,287.5 317.40000000000003,283.9" fill="#1c8c14"/>
<line x1="315.3" y1="302.5" x2="315.3" y2="310" stroke="#988816" stroke-width="1.25"/>
<polygon points="313.2,303.6 315.3,300 317.40000000000003,303.6" fill="#988816"/>
<line x1="315.3" y1="335.5" x2="315.3" y2="343" stroke="#988816" stroke-width="1.25"/>
<polygon points="313.2,336.6 315.3,333 317.40000000000003,336.6" fill="#988816"/>
<line x1="315.3" y1="358.1" x2="315.3" y2="366.5" stroke="#988816" stroke-width="1.25"/>
<polygon points="313.2,359.20000000000005 315.3,355.6 317.40000000000003,359.20000000000005" fill="#988816"/>
<line x1="315.3" y1="388" x2="315.3" y2="395.5" stroke="#1c8c14" stroke-width="1.25"/>
<polygon points="313.2,394.4 315.3,398 317.40000000000003,394.4" fill="#1c8c14"/>
<line x1="315.3" y1="416.5" x2="315.3" y2="425" stroke="#988816" stroke-width="1.25"/>
<polygon points="313.2,417.6 315.3,414 317.40000000000003,417.6" fill="#988816"/>
<line x1="348.6" y1="208.3" x2="348.6" y2="215.8" stroke="#988816" stroke-width="1.25"/>
<polygon points="346.5,209.4 348.6,205.8 350.70000000000005,209.4" fill="#988816"/>
<line x1="348.6" y1="225.0" x2="348.6" y2="232.5" stroke="#1c8c14" stroke-width="1.25"/>
<polygon points="346.5,226.1 348.6,222.5 350.70000000000005,226.1" fill="#1c8c14"/>
<line x1="348.6" y1="277.5" x2="348.6" y2="285.0" stroke="#1c8c14" stroke-width="1.25"/>
<polygon points="346.5,283.9 348.6,287.5 350.70000000000005,283.9" fill="#1c8c14"/>
<line x1="348.6" y1="302.5" x2="348.6" y2="310" stroke="#988816" stroke-width="1.25"/>
<polygon points="346.5,303.6 348.6,300 350.70000000000005,303.6" fill="#988816"/>
<line x1="348.6" y1="335.5" x2="348.6" y2="343" stroke="#988816" stroke-width="1.25"/>
<polygon points="346.5,336.6 348.6,333 350.70000000000005,336.6" fill="#988816"/>
<line x1="348.6" y1="358.1" x2="348.6" y2="366.5" stroke="#988816" stroke-width="1.25"/>
<polygon points="346.5,359.20000000000005 348.6,355.6 350.70000000000005,359.20000000000005" fill="#988816"/>
<line x1="348.6" y1="388" x2="348.6" y2="395.5" stroke="#1c8c14" stroke-width="1.25"/>
<polygon points="346.5,394.4 348.6,398 350.70000000000005,394.4" fill="#1c8c14"/>
<line x1="348.6" y1="416.5" x2="348.6" y2="425" stroke="#988816" stroke-width="1.25"/>
<polygon points="346.5,417.6 348.6,414 350.70000000000005,417.6" fill="#988816"/>
<text x="333.7" y="203.3" font-size="8" fill="#141c2a" text-anchor="middle" stroke="#141c2a" stroke-width=".25">站</text>
<text x="333.7" y="213.0" font-size="8" fill="#141c2a" text-anchor="middle" stroke="#141c2a" stroke-width=".25">台</text>
<text x="333.7" y="222.70000000000002" font-size="8" fill="#141c2a" text-anchor="middle" stroke="#141c2a" stroke-width=".25">商</text>
<text x="333.7" y="232.4" font-size="8" fill="#141c2a" text-anchor="middle" stroke="#141c2a" stroke-width=".25">业</text>
<text x="333.7" y="242.10000000000002" font-size="8" fill="#141c2a" text-anchor="middle" stroke="#141c2a" stroke-width=".25">区</text>
<text x="332.8" y="300.3" font-size="8" fill="#141c2a" text-anchor="middle" stroke="#141c2a" stroke-width=".25">站</text>
<text x="332.8" y="310.0" font-size="8" fill="#141c2a" text-anchor="middle" stroke="#141c2a" stroke-width=".25">厅</text>
<text x="332.8" y="319.7" font-size="8" fill="#141c2a" text-anchor="middle" stroke="#141c2a" stroke-width=".25">公</text>
<text x="332.8" y="329.40000000000003" font-size="8" fill="#141c2a" text-anchor="middle" stroke="#141c2a" stroke-width=".25">共</text>
<text x="332.8" y="339.1" font-size="8" fill="#141c2a" text-anchor="middle" stroke="#141c2a" stroke-width=".25">区</text>
<text x="332.8" y="383.3" font-size="6" fill="#141c2a" text-anchor="middle" stroke="#141c2a" stroke-width=".2">站</text>
<text x="332.8" y="390.8" font-size="6" fill="#141c2a" text-anchor="middle" stroke="#141c2a" stroke-width=".2">台</text>
<text x="332.8" y="398.3" font-size="6" fill="#141c2a" text-anchor="middle" stroke="#141c2a" stroke-width=".2">公</text>
<text x="332.8" y="405.8" font-size="6" fill="#141c2a" text-anchor="middle" stroke="#141c2a" stroke-width=".2">共</text>
<text x="332.8" y="413.3" font-size="6" fill="#141c2a" text-anchor="middle" stroke="#141c2a" stroke-width=".2">区</text></svg>
<div id="log" class="abs"><span>2015/10/20 16:43:33：初始化完成！</span></div>
<div id="bottomline" class="abs"></div>
<div class="abs" style="left:598.8px;top:167px;width:1.2px;height:290px;background:#cfcfcf;"></div>
</div>
</body></html>
